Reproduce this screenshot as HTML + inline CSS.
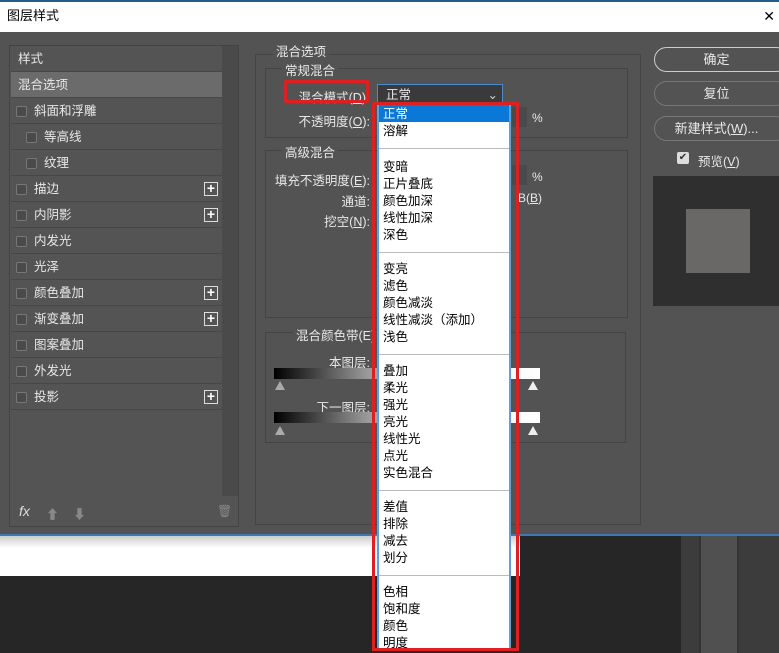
<!DOCTYPE html>
<html><head><meta charset="utf-8"><style>
*{margin:0;padding:0;box-sizing:border-box}
body{width:779px;height:653px;overflow:hidden;position:relative;background:#262626;font-family:"Liberation Sans","Noto Sans CJK SC",sans-serif;font-size:12px;color:#e8e8e8}
.a{position:absolute}
.row{position:absolute;left:11px;width:211px;height:26px;border-bottom:1px solid #474747;line-height:27px;font-size:12.5px}
.cb{position:absolute;top:8px;width:11px;height:11px;border:1px solid #777;border-radius:2px;background:#4a4a4a}
.plus{position:absolute;right:4px;top:6px;width:14px;height:14px;border:1px solid #ddd;color:#fff;text-align:center;line-height:11px;font-size:14px;font-weight:bold}
.box{position:absolute;border:1px solid #444;}
.lbl{position:absolute;background:#535353;padding:0 3px;font-size:12.5px}
.btn{position:absolute;left:654px;width:135px;height:25px;border:1px solid #888;border-radius:13px;text-align:center;line-height:23px;font-size:13px;padding-right:10px}
.menu div{height:17px;line-height:17px;padding-left:4px;color:#000;font-size:12.5px}
.menu hr{border:0;border-top:1px solid #bbb;margin:8px 0 8px 0}
.r{position:absolute;text-align:right;font-size:12.5px}
.tri{position:absolute;width:0;height:0;border-left:5px solid transparent;border-right:5px solid transparent;border-bottom:9px solid #ccc}
</style></head><body>
<div class="a" style="left:0;top:0;width:779px;height:2px;background:#2a5a8a"></div>
<div class="a" style="left:0;top:2px;width:779px;height:30px;background:#fff;color:#000;font-size:13px;line-height:28px;padding-left:7px">图层样式<span style="position:absolute;right:4px;font-size:14px">✕</span></div>
<div class="a" style="left:0;top:32px;width:779px;height:502px;background:#535353"></div>
<div class="a" style="left:0;top:534px;width:779px;height:2px;background:#3d7ab5"></div>
<div class="a" style="left:0;top:536px;width:520px;height:40px;background:linear-gradient(#ccc,#fff 12px,#fff)"></div>
<div class="a" style="left:681px;top:536px;width:98px;height:117px;background:#3c3c3c"></div>
<div class="a" style="left:699px;top:536px;width:40px;height:117px;background:#505050;border-left:2px solid #333;border-right:2px solid #333"></div>

<!-- left panel -->
<div class="a" style="left:9px;top:45px;width:230px;height:482px;border:1px solid #444;background:#545454"></div>
<div class="a" style="left:222px;top:46px;width:16px;height:450px;background:#4a4a4a"></div>
<div class="row" style="top:46px;padding-left:7px">样式</div>
<div class="row" style="top:72px;padding-left:7px;background:#6b6b6b">混合选项</div>
<div class="row" style="top:98px;padding-left:23px"><span class="cb" style="left:5px"></span>斜面和浮雕</div>
<div class="row" style="top:124px;padding-left:33px"><span class="cb" style="left:15px"></span>等高线</div>
<div class="row" style="top:150px;padding-left:33px"><span class="cb" style="left:15px"></span>纹理</div>
<div class="row" style="top:176px;padding-left:23px"><span class="cb" style="left:5px"></span>描边<span class="plus">+</span></div>
<div class="row" style="top:202px;padding-left:23px"><span class="cb" style="left:5px"></span>内阴影<span class="plus">+</span></div>
<div class="row" style="top:228px;padding-left:23px"><span class="cb" style="left:5px"></span>内发光</div>
<div class="row" style="top:254px;padding-left:23px"><span class="cb" style="left:5px"></span>光泽</div>
<div class="row" style="top:280px;padding-left:23px"><span class="cb" style="left:5px"></span>颜色叠加<span class="plus">+</span></div>
<div class="row" style="top:306px;padding-left:23px"><span class="cb" style="left:5px"></span>渐变叠加<span class="plus">+</span></div>
<div class="row" style="top:332px;padding-left:23px"><span class="cb" style="left:5px"></span>图案叠加</div>
<div class="row" style="top:358px;padding-left:23px"><span class="cb" style="left:5px"></span>外发光</div>
<div class="row" style="top:384px;padding-left:23px"><span class="cb" style="left:5px"></span>投影<span class="plus">+</span></div>
<div class="a" style="left:19px;top:503px;font-style:italic;font-size:14px;color:#ddd">fx</div>
<div class="a" style="left:46px;top:504px;color:#888;font-size:13px">⬆</div>
<div class="a" style="left:73px;top:504px;color:#888;font-size:13px">⬇</div>
<div class="a" style="left:217px;top:504px;color:#888;font-size:12px">🗑</div>

<!-- middle -->
<div class="box" style="left:255px;top:54px;width:386px;height:471px"></div>
<div class="lbl" style="left:273px;top:41px">混合选项</div>
<div class="box" style="left:265px;top:68px;width:363px;height:70px"></div>
<div class="lbl" style="left:282px;top:60px">常规混合</div>
<div class="r" style="left:290px;top:87px;width:76px">混合模式(<u>D</u>)</div>
<div class="a" style="left:284px;top:80px;width:85px;height:23px;border:3px solid #e02020;border-radius:2px"></div>
<div class="a" style="left:377px;top:84px;width:126px;height:21px;background:#3a3a3a;border:1px solid #4a8ad0;padding-left:8px;line-height:21px;font-size:12.5px">正常<span style="position:absolute;right:4px;color:#ccc">⌄</span></div>
<div class="r" style="left:290px;top:111px;width:80px">不透明度(<u>O</u>):</div>
<div class="a" style="left:512px;top:107px;width:15px;height:20px;background:#4a4a4a"></div>
<div class="a" style="left:532px;top:111px">%</div>
<div class="box" style="left:265px;top:150px;width:363px;height:168px"></div>
<div class="lbl" style="left:282px;top:142px">高级混合</div>
<div class="r" style="left:270px;top:170px;width:100px">填充不透明度(<u>E</u>):</div>
<div class="a" style="left:512px;top:165px;width:15px;height:20px;background:#4a4a4a"></div>
<div class="a" style="left:532px;top:170px">%</div>
<div class="r" style="left:300px;top:191px;width:70px">通道:</div>
<div class="a" style="left:518px;top:191px">B(<u>B</u>)</div>
<div class="r" style="left:300px;top:211px;width:70px">挖空(<u>N</u>):</div>
<div class="box" style="left:265px;top:332px;width:361px;height:111px"></div>
<div class="lbl" style="left:293px;top:325px">混合颜色带(E)</div>
<div class="r" style="left:300px;top:352px;width:70px">本图层:</div>
<div class="a" style="left:274px;top:368px;width:266px;height:11px;background:linear-gradient(90deg,#000,#999 35%,#eee 70%,#fff)"></div>
<div class="tri" style="left:275px;top:381px;border-bottom-color:#aaa"></div>
<div class="tri" style="left:528px;top:381px;border-bottom-color:#eee"></div>
<div class="r" style="left:300px;top:397px;width:70px">下一图层:</div>
<div class="a" style="left:274px;top:412px;width:266px;height:11px;background:linear-gradient(90deg,#000,#999 35%,#eee 70%,#fff)"></div>
<div class="tri" style="left:275px;top:426px;border-bottom-color:#aaa"></div>
<div class="tri" style="left:528px;top:426px;border-bottom-color:#eee"></div>

<!-- right -->
<div class="btn" style="top:47px;border-color:#ccc">确定</div>
<div class="btn" style="top:81px;border-color:#777">复位</div>
<div class="btn" style="top:116px;border-color:#777">新建样式(<u>W</u>)...</div>
<div class="a" style="left:677px;top:152px;width:12px;height:12px;background:#ddd;border-radius:2px;color:#333;font-size:10px;line-height:12px;text-align:center">✔</div>
<div class="a" style="left:698px;top:151px;font-size:12.5px">预览(<u>V</u>)</div>
<div class="a" style="left:653px;top:176px;width:126px;height:130px;background:#2f2f2f"></div>
<div class="a" style="left:686px;top:209px;width:64px;height:64px;background:#6a6866"></div>

<!-- menu -->
<div class="a menu" style="left:377px;top:104px;width:134px;height:546px;background:#fff;border-left:2px solid #5fa0d8;border-right:2px solid #5fa0d8;padding-top:2px">
<div style="background:#0a78d7;color:#fff;line-height:19px;margin-top:-1px">正常</div><div style="line-height:19px">溶解</div><hr style="margin:9px 0 10px 0">
<div>变暗</div><div>正片叠底</div><div>颜色加深</div><div>线性加深</div><div>深色</div><hr>
<div>变亮</div><div>滤色</div><div>颜色减淡</div><div>线性减淡（添加）</div><div>浅色</div><hr>
<div>叠加</div><div>柔光</div><div>强光</div><div>亮光</div><div>线性光</div><div>点光</div><div>实色混合</div><hr>
<div>差值</div><div>排除</div><div>减去</div><div>划分</div><hr>
<div>色相</div><div>饱和度</div><div>颜色</div><div>明度</div>
</div>
<div class="a" style="left:372px;top:102px;width:147px;height:549px;border:3px solid #e02020"></div>
</body></html>
